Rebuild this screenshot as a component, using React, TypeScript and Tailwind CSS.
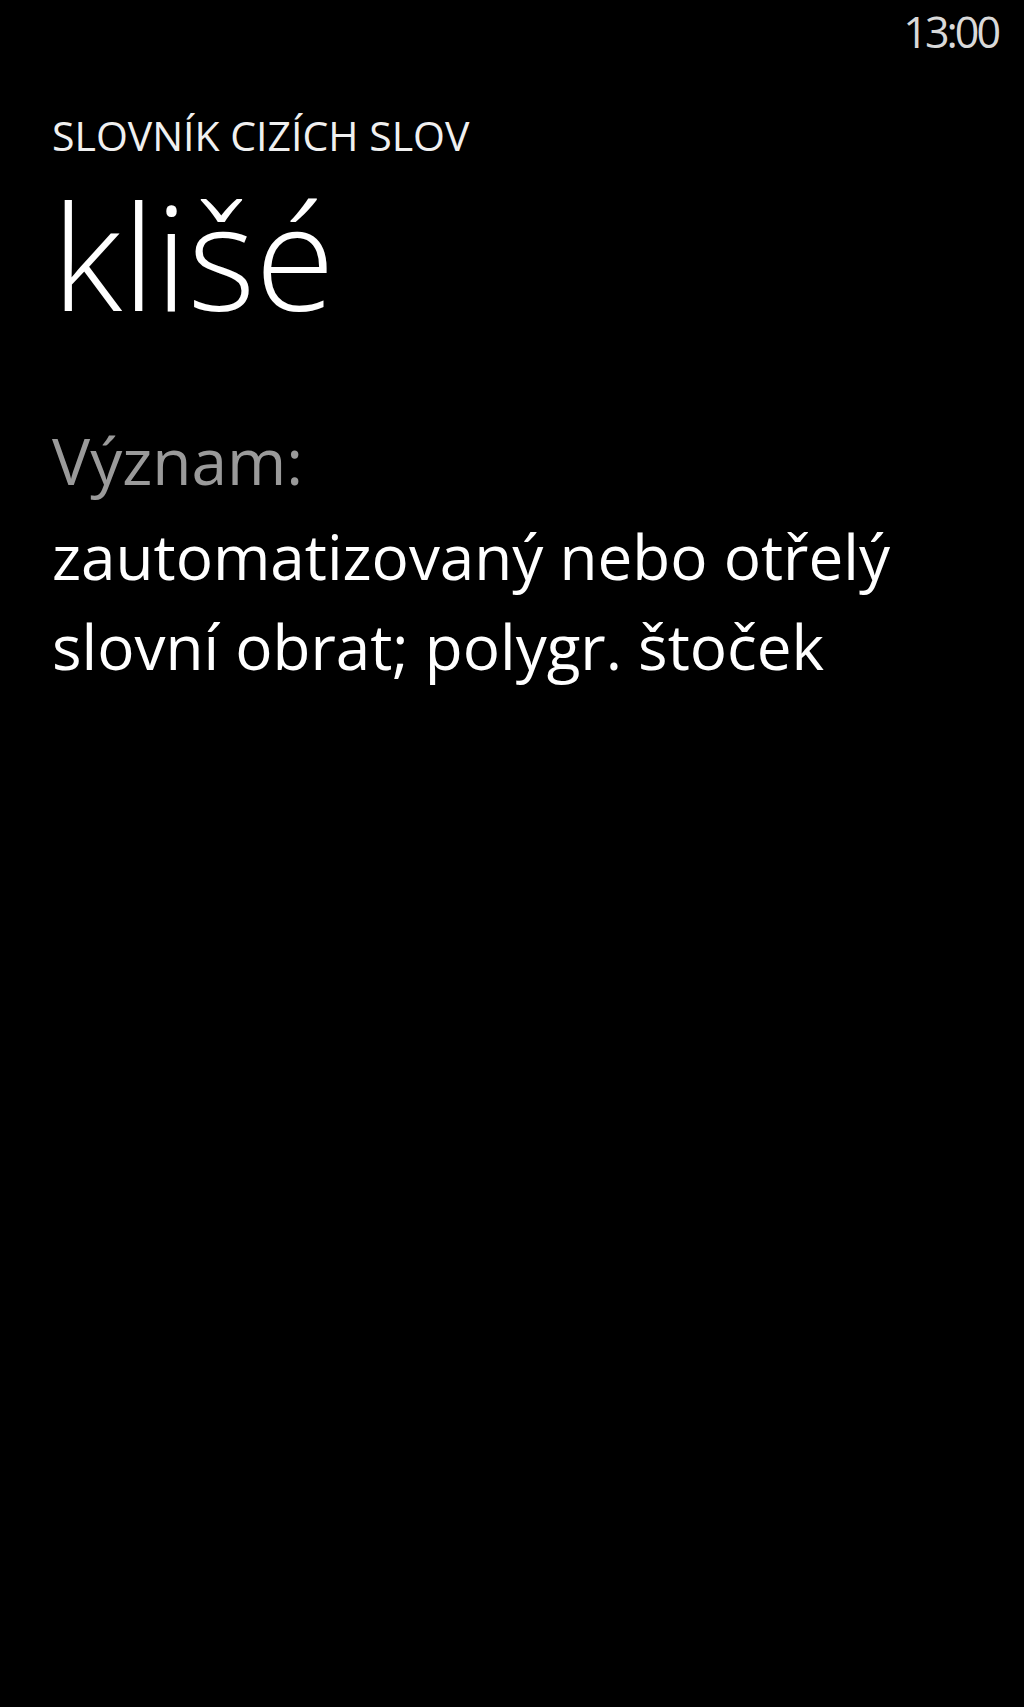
export default function App() {
  const font = { fontFamily: '"Open Sans", "Noto Sans", sans-serif' };
  return (
    <div className="min-h-[1707px] w-[1024px] bg-black text-white" style={font}>
      <div className="flex justify-end pr-[26px] pt-[10px]">
        <span className="text-[43px] leading-none tracking-[-3px] text-[#d9d9d9]">13:00</span>
      </div>
      <div className="flex flex-col pl-[52px]">
        <h2 className="mt-[62px] text-[41px] leading-none uppercase text-[#f0f0f0]">Slovník cizích slov</h2>
        <h1 className="mt-[26px] text-[145px] leading-none font-light">klišé</h1>
        <p className="mt-[102px] text-[64px] leading-none text-[#9a9a9a]">Význam:</p>
        <p className="mt-[18px] w-[920px] text-[62px] leading-[90px]">
          zautomatizovaný nebo otřelý slovní obrat; polygr. štoček
        </p>
      </div>
    </div>
  );
}
